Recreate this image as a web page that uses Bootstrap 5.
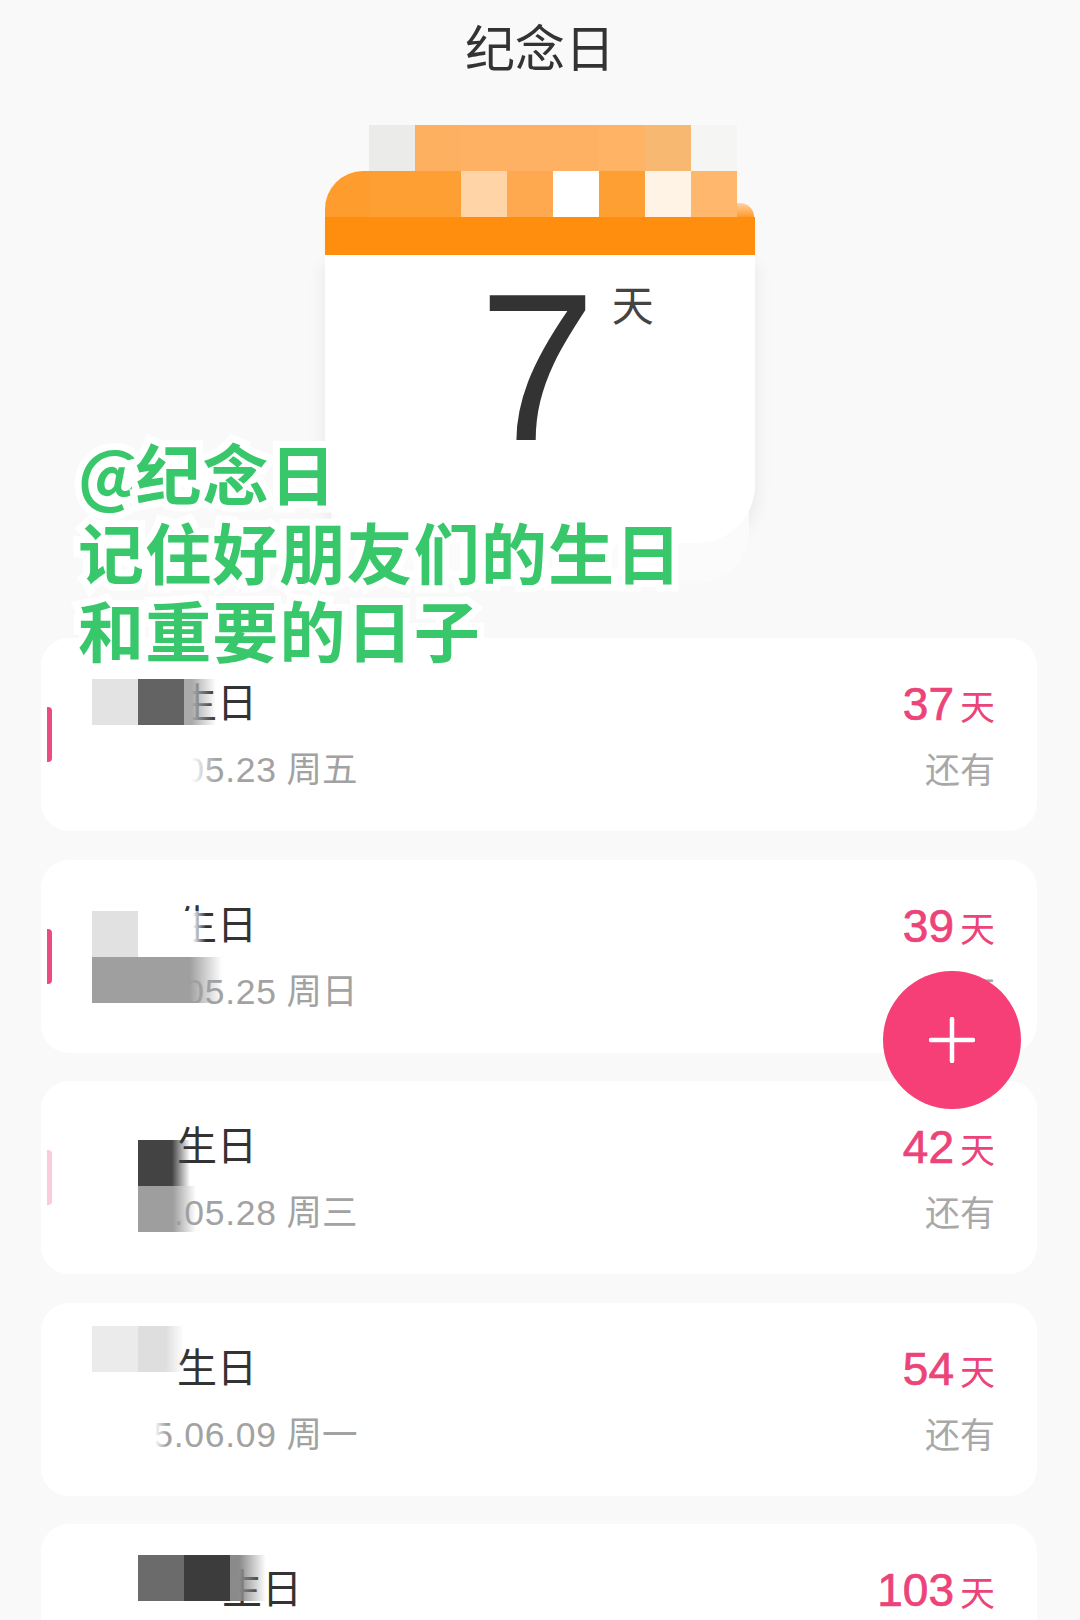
<!DOCTYPE html>
<html lang="zh-CN">
<head>
  <meta charset="UTF-8" />
  <meta name="viewport" content="width=device-width, initial-scale=1.0"/>
  <title>纪念日</title>
  <link href="https://cdn.jsdelivr.net/npm/bootstrap@5.3.2/dist/css/bootstrap.min.css" rel="stylesheet" />
  <style>
    html, body {
      height: 1620px;
      overflow: hidden;
    }

    body {
      margin: 0;
      background-color: #f9f9f9;
      color: #333;
      font-family: "Liberation Sans", "Noto Sans CJK SC", sans-serif;
    }

    .page {
      height: 1620px;
      overflow: hidden;
    }

    .page-title {
      height: 100px;
      font-size: 50px;
      line-height: 101px;
      text-align: center;
      color: #333;
    }

    /* CALENDAR */
    .calendar {
      width: 430px;
      margin: 25px 0 0 325px;
    }

    .cal-row {
      display: flex;
      height: 46px;
    }

    .cal-cell {
      width: 46px;
      height: 46px;
      flex: none;
    }

    .cal-row-top { padding-left: 44px; }

    .cal-row-mid .cal-first {
      width: 44px;
      border-top-left-radius: 38px;
    }

    .cal-end {
      width: 17px;
      height: 14px;
      align-self: flex-end;
      background: linear-gradient(#fdd3a4 0, #ff9a2b 100%);
      border-top-right-radius: 14px;
    }

    .cal-band {
      height: 38px;
      background-color: #ff8e0e;
      box-shadow: 0 5px 4px -2px rgba(255, 142, 14, .35);
    }

    .cal-body {
      height: 288px;
      background-color: #fff;
      border-radius: 0 0 58px 58px;
      box-shadow: 0 46px 0 -6px #fbfbfb, 6px 8px 14px rgba(0, 0, 0, .04), -6px 8px 14px rgba(0, 0, 0, .04);
    }

    .cal-count {
      padding-left: 154px;
      padding-top: 13px;
      height: 210px;
    }

    .cal-num {
      font-size: 210px;
      line-height: 200px;
    }

    .cal-unit {
      font-size: 42px;
      line-height: 48px;
      margin: 15px 0 0 16px;
      color: #444;
    }

    /* GREEN CAPTION */
    .caption {
      position: absolute;
      left: 78px;
      top: 432px;
      font-family: "Noto Sans CJK SC", sans-serif;
      font-weight: 700;
      font-size: 66px;
      line-height: 78.5px;
      letter-spacing: 1.15px;
      color: #38c76b;
      -webkit-text-stroke: 14px #fff;
      paint-order: stroke fill;
      z-index: 5;
      white-space: nowrap;
    }

    .caption .at-sign {
      letter-spacing: -9px;
    }

    /* DAY CARDS */
    .day-list {
      position: absolute;
      left: 41px;
      top: 638px;
      width: 996px;
      display: flex;
      flex-direction: column;
      gap: 28.5px;
    }

    .day-card {
      height: 193px;
      border-radius: 28px;
      background-color: #fff;
      padding: 40px 42px 0 51px;
      overflow: hidden;
    }

    .day-name {
      font-size: 40px;
      line-height: 50px;
      height: 50px;
      color: #333;
    }

    .day-date {
      font-size: 35.5px;
      line-height: 44px;
      margin-top: 20px;
      color: #a2a2a2;
    }

    .day-date .digits { letter-spacing: .7px; }

    .day-left-count {
      font-size: 46px;
      line-height: 50px;
      margin-top: 1px;
      color: #ec4379;
      -webkit-text-stroke: .7px #ec4379;
      text-align: right;
    }

    .day-left-count .unit {
      font-size: 35px;
      -webkit-text-stroke: 0;
      margin-left: 6px;
    }

    .day-left-label {
      font-size: 35px;
      line-height: 44px;
      margin-top: 16px;
      color: #a8a8a8;
      text-align: right;
    }

    .tag-bar {
      position: absolute;
      left: 6px;
      top: 69px;
      width: 5px;
      height: 55px;
      background-color: #ec4b81;
      border-radius: 0 4px 4px 0;
    }

    .tag-bar.faded { background-color: #fbcadb; }

    /* mosaic blocks lying over the names and dates */
    .mosaic-block {
      position: absolute;
    }

    .fab {
      position: absolute;
      left: 883px;
      top: 971px;
      width: 138px;
      height: 138px;
      padding: 0;
      background-color: #f53f76;
      border: 0;
      z-index: 6;
    }

    .fab svg { display: block; margin: auto; }
  </style>
</head>
<body>

  <div class="page position-relative">
    <div class="page-title">纪念日</div>

    <!-- calendar -->
    <div class="calendar">
      <div class="cal-row cal-row-top" id="cal-top"></div>
      <div class="cal-row cal-row-mid" id="cal-mid"></div>
      <div class="cal-band"></div>
      <div class="cal-body">
        <div class="cal-count d-flex align-items-start">
          <span class="cal-num">7</span>
          <span class="cal-unit">天</span>
        </div>
      </div>
    </div>

    <div class="caption"><span class="at-sign">@</span>纪念日<br>记住好朋友们的生日<br>和重要的日子</div>

    <div class="day-list" id="day-list"></div>

    <button class="fab btn rounded-circle d-flex align-items-center" type="button" aria-label="添加">
      <svg width="46" height="46" viewBox="0 0 46 46"><path d="M23 2v42M2 23h42" stroke="#fff" stroke-width="4.5" stroke-linecap="round" fill="none"/></svg>
    </button>
  </div>

  <script src="https://cdn.jsdelivr.net/npm/bootstrap@5.3.2/dist/js/bootstrap.bundle.min.js"></script>

  <script>
    function addCells(rowId, colors) {
      const row = document.getElementById(rowId);
      colors.forEach((c, i) => {
        const cell = document.createElement("div");
        cell.className = "cal-cell" + (rowId === "cal-mid" && i === 0 ? " cal-first" : "");
        cell.style.background = c;
        row.appendChild(cell);
      });
    }

    addCells("cal-top", ["#ebebe9", "#fdb160", "#feb162", "#feb162", "#feb162", "#ffb364", "#f7b872", "#f5f5f3"]);
    addCells("cal-mid", ["#fe9d2e", "#fe9f33", "#fe9f33", "#ffd4a6", "#fea950", "#ffffff", "#fe9f33", "#fff3e6", "#feb76c"]);
    document.getElementById("cal-mid").insertAdjacentHTML("beforeend", '<div class="cal-end"></div>');

    // solid colour up to `at` (share of the width), then fades out
    const fade = (c, at) => `linear-gradient(90deg, ${c} ${at}%, rgba(255,255,255,0) 100%)`;

    // blocks are [left, top, width, height, background], in pixels inside the card
    const days = [
      { pad: 85, date: "2025.05.23", week: "周五", left: 37, bar: "",
        blocks: [
          [51, 41, 46, 46, "#e3e3e3"], [97, 41, 46, 46, "#636363"], [143, 41, 32, 46, fade("#aaaaaa", 25)],
          [51, 100, 124, 50, fade("#ffffff", 80)]
        ] },
      { pad: 85, date: "2025.05.25", week: "周日", left: 39, bar: "",
        blocks: [
          [51, 51, 46, 46, "#e1e1e1"], [97, 51, 46, 46, "#ffffff"], [143, 51, 22, 46, fade("#ffffff", 40)],
          [51, 97, 130, 46, fade("#9f9f9f", 75)], [51, 143, 112, 8, "#ffffff"]
        ] },
      { pad: 85, date: "2025.05.28", week: "周三", left: 42, bar: "faded",
        blocks: [
          [51, 59, 46, 92, "#ffffff"], [97, 59, 52, 46, fade("#434343", 65)], [97, 105, 58, 46, fade("#9e9e9e", 60)]
        ] },
      { pad: 85, date: "2025.06.09", week: "周一", left: 54, bar: "none",
        blocks: [
          [51, 23, 46, 46, "#ebebeb"], [97, 23, 46, 46, fade("#dedede", 60)],
          [51, 100, 74, 50, fade("#ffffff", 85)]
        ] },
      { pad: 130, left: 103, bar: "none",
        blocks: [
          [97, 31, 46, 46, "#6b6b6b"], [143, 31, 46, 46, "#3c3c3c"], [189, 31, 36, 46, fade("#8a8a8a", 25)]
        ] }
    ];

    const list = document.getElementById("day-list");
    days.forEach((d) => {
      const card = document.createElement("div");
      card.className = "day-card card border-0 position-relative d-flex flex-row justify-content-between";
      // the last card runs off the screen, its second line is never seen
      card.innerHTML = `
        ${d.bar === "none" ? "" : `<span class="tag-bar ${d.bar}"></span>`}
        <div>
          <div class="day-name" style="padding-left: ${d.pad}px">生日</div>
          ${d.date ? `<div class="day-date"><span class="digits">${d.date}</span> ${d.week}</div>` : ""}
        </div>
        <div>
          <div class="day-left-count">${d.left}<span class="unit">天</span></div>
          ${d.date ? `<div class="day-left-label">还有</div>` : ""}
        </div>
      `;
      d.blocks.forEach((b) => {
        const block = document.createElement("div");
        block.className = "mosaic-block";
        block.style.left = b[0] + "px";
        block.style.top = b[1] + "px";
        block.style.width = b[2] + "px";
        block.style.height = b[3] + "px";
        block.style.background = b[4];
        card.appendChild(block);
      });
      list.appendChild(card);
    });
  </script>

</body>
</html>
